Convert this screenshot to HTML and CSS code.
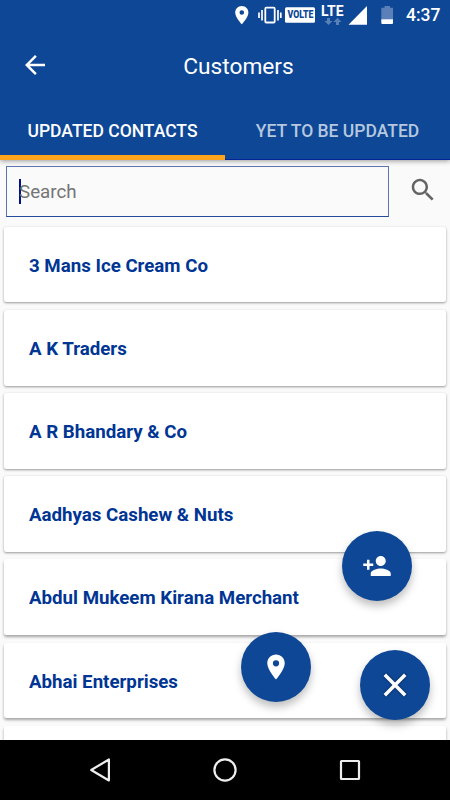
FILE: index.html
```html
<!DOCTYPE html>
<html lang="en">
<head>
<meta charset="utf-8">
<title>Customers</title>
<link rel="stylesheet" href="styles.css">
</head>
<body>
<div class="screen">
  <header class="header">
    <div class="status">
      <svg class="status-icons" width="165" height="30" viewBox="235 0 165 30">
        <path fill="#fff" fill-rule="evenodd" d="M241.8 6c-3.7 0-6.6 2.9-6.6 6.5 0 4.9 6.6 11.8 6.6 11.8s6.6-6.9 6.6-11.8c0-3.600-2.900-6.500-6.600-6.500zm0 4.200a2.300 2.300 0 1 1 0 4.600 2.300 2.300 0 0 1 0-4.600z"/>
        <rect x="265.300" y="7.700" width="9.400" height="14.800" rx="1" fill="none" stroke="#fff" stroke-width="1.800"/>
        <path stroke="#fff" stroke-width="1.700" d="M262 10v10.500M278 10v10.500M259 12.500v5.500M280.800 12.500v5.500"/>
        <rect x="285" y="7.200" width="30" height="15.500" rx="1.500" fill="#fff"/>
        <text class="volte" x="287.500" y="18.300" textLength="26" lengthAdjust="spacingAndGlyphs">VOLTE</text>
        <text class="lte" x="321" y="16" textLength="22.500" lengthAdjust="spacingAndGlyphs">LTE</text>
        <path fill="#5a80b7" d="M327 18h3v3h2.500l-4 4-4-4H327zM336 25h3v-3h2.500l-4-4.200-4 4.200h2.500z"/>
        <path fill="#fff" d="M348.500 24.700 367 6v18.700z"/>
        <path fill="#5a80b7" d="M384.500 6h5.500v1.800h3V19.500h-11.700V7.800h3.200z"/>
        <path fill="#fff" d="M381.300 19.300H393v3.700q0 1-1 1h-9.700q-1 0-1-1z"/>
      </svg>
      <span class="time">4:37</span>
    </div>
    <div class="toolbar">
      <svg class="icon" viewBox="0 0 24 24"><path fill="#fff" d="M20 11H7.830l5.590-5.590L12 4l-8 8 8 8 1.410-1.410L7.830 13H20v-2z"/></svg>
      <h1 class="title">Customers</h1>
    </div>
    <nav class="tabs">
      <div class="tab active">UPDATED CONTACTS</div>
      <div class="tab">YET TO BE UPDATED</div>
    </nav>
  </header>
  <main class="content">
    <div class="search">
      <div class="field"><span class="caret"></span><span class="hint">Search</span></div>
      <svg class="icon search-icon" viewBox="0 0 24 24"><path fill="#646464" d="M15.500 14h-.790l-.280-.270C15.410 12.590 16 11.110 16 9.500 16 5.910 13.090 3 9.500 3S3 5.910 3 9.500 5.910 16 9.500 16c1.610 0 3.090-.590 4.230-1.570l.270.280v.790l5 4.990L20.490 19l-4.990-5zm-6 0C7.010 14 5 11.990 5 9.500S7.010 5 9.500 5 14 7.010 14 9.500 11.990 14 9.500 14z"/></svg>
    </div>
    <div class="list">
      <div class="card">3 Mans Ice Cream Co</div>
      <div class="card">A K Traders</div>
      <div class="card">A R Bhandary &amp; Co</div>
      <div class="card">Aadhyas Cashew &amp; Nuts</div>
      <div class="card low">Abdul Mukeem Kirana Merchant</div>
      <div class="card low">Abhai Enterprises</div>
      <div class="card low"></div>
    </div>
  </main>
  <div class="fab fab-person">
    <svg class="icon" viewBox="0 0 24 24"><path fill="#fff" d="M15 12c2.210 0 4-1.790 4-4s-1.790-4-4-4-4 1.790-4 4 1.790 4 4 4zm-9-2V7H4v3H1v2h3v3h2v-3h3v-2H6zm9 4c-2.670 0-8 1.340-8 4v2h16v-2c0-2.660-5.330-4-8-4z"/></svg>
  </div>
  <div class="fab fab-place">
    <svg class="icon" viewBox="0 0 24 24"><path fill="#fff" d="M12 2C8.130 2 5 5.130 5 9c0 5.250 7 13 7 13s7-7.750 7-13c0-3.870-3.130-7-7-7zm0 9.500a2.500 2.500 0 1 1 0-5 2.500 2.500 0 0 1 0 5z"/></svg>
  </div>
  <div class="fab fab-close">
    <svg class="close-icon" viewBox="0 0 24 24"><path stroke="#fff" stroke-width="3.500" d="M1.800 1.800l20.400 20.400M22.200 1.800L1.800 22.200"/></svg>
  </div>
  <footer class="navbar">
    <svg width="24" height="28" viewBox="0 0 24 28"><path fill="none" stroke="#eee" stroke-width="2.200" stroke-linejoin="round" d="M20.900 3.500v21L3.200 14z"/></svg>
    <svg width="28" height="28" viewBox="0 0 28 28"><circle cx="14" cy="14" r="10.600" fill="none" stroke="#eee" stroke-width="2.200"/></svg>
    <svg width="24" height="28" viewBox="0 0 24 28"><rect x="3" y="5" width="18" height="18" rx=".5" fill="none" stroke="#eee" stroke-width="2.200"/></svg>
  </footer>
</div>
</body>
</html>
```
FILE: styles.css
```css
* { box-sizing: border-box; }
body {
  margin: 0;
  font-family: Roboto, "Liberation Sans", sans-serif;
}
.screen {
  position: relative;
  display: flex;
  flex-direction: column;
  width: 450px;
  height: 800px;
  overflow: hidden;
  background: #fafafa;
}
.header {
  z-index: 1;
  flex: none;
  height: 160px;
  background: #0d4796;
  color: #fff;
  box-shadow: 0 1px 5px rgba(0, 0, 0, .4);
}
.status {
  display: flex;
  align-items: center;
  justify-content: flex-end;
  gap: 6px;
  height: 30px;
  padding-right: 10px;
}
.volte { font: 900 10px Roboto, sans-serif; fill: #0d4796; }
.lte { font: 700 14px Roboto, sans-serif; fill: #fff; }
.time {
  width: 34px;
  font-size: 17.500px;
  font-weight: 500;
  line-height: 32px;
  white-space: nowrap;
}
.icon { flex: none; display: block; width: 30px; height: 30px; }
.toolbar {
  display: flex;
  align-items: center;
  height: 70px;
  padding: 0 20px;
}
.title {
  flex: 1;
  margin: 2px 3px 0 0;
  font-size: 22.700px;
  font-weight: 400;
  text-align: center;
}
.tabs { display: flex; height: 60px; }
.tab {
  flex: 1;
  border-bottom: 1px solid #00259a;
  color: #b6c8df;
  font-size: 17.500px;
  font-weight: 500;
  line-height: 63px;
  text-align: center;
  white-space: nowrap;
}
.tab.active { border-bottom: 5px solid #fba41c; color: #fff; }
.content { flex: 1; min-height: 0; overflow: hidden; }
.search {
  display: flex;
  align-items: flex-start;
  justify-content: space-between;
  padding: 6px 12px 0 6px;
}
.field {
  display: flex;
  align-items: center;
  width: 383px;
  height: 51px;
  padding-left: 12px;
  border: 1px solid #5c75ad;
  border-bottom-color: #244b99;
}
.caret { width: 2px; height: 25px; margin-right: -2px; background: #00118b; }
.hint { margin-top: 1px; color: #757575; font-size: 18.750px; }
.search-icon { margin-top: 9px; }
.list {
  display: flex;
  flex-direction: column;
  gap: 7.500px;
  padding: 9.700px 4px 0;
}
.card {
  flex: none;
  height: 75.700px;
  padding-left: 25px;
  border-radius: 2.500px;
  background: #fff;
  box-shadow: 0 1px 2.500px rgba(0, 0, 0, .4);
  color: #003594;
  font-size: 18.700px;
  font-weight: 700;
  line-height: 79px;
}
.card.low { box-shadow: 0 2px 3px rgba(0, 0, 0, .35); }
.fab {
  position: absolute;
  z-index: 2;
  display: flex;
  align-items: center;
  justify-content: center;
  width: 70px;
  height: 70px;
  border-radius: 50%;
  background: #0d4796;
  box-shadow: 0 5px 9px rgba(0, 0, 0, .26);
}
.fab-person { left: 342.400px; top: 531px; }
.fab-place { left: 241.200px; top: 632.400px; }
.fab-close { left: 360px; top: 650px; }
.close-icon { width: 24px; height: 24px; filter: drop-shadow(0 0 1px rgba(0, 0, 0, .6)); }
.navbar {
  z-index: 3;
  flex: none;
  display: flex;
  align-items: center;
  justify-content: space-between;
  height: 60px;
  padding: 0 88px;
  background: #000;
}
```
